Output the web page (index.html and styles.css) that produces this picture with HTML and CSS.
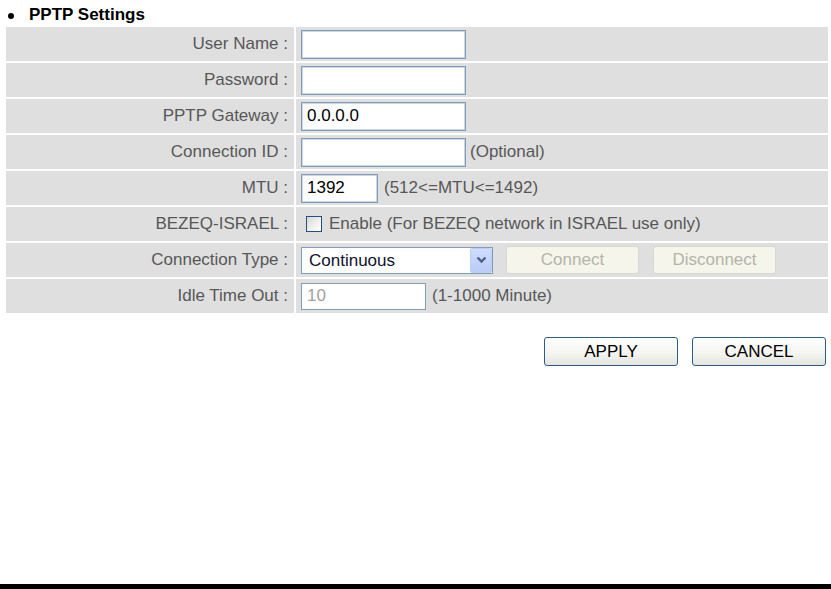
FILE: index.html
```html
<!doctype html>
<html lang="en">

<head>
  <meta charset="UTF-8">
  <meta name="viewport" content="width=device-width, initial-scale=1.0">
  <title>PPTP Settings</title>
  <link rel="stylesheet" href="styles.css">
</head>

<body>
  <div class="page">
    <h2 class="section-title"><span class="bullet"></span>PPTP Settings</h2>

    <table class="settings">
      <colgroup>
        <col class="label-col">
        <col>
      </colgroup>
      <tr>
        <td class="label">User Name :</td>
        <td class="value"><div class="controls"><input class="field field-wide" type="text"></div></td>
      </tr>
      <tr>
        <td class="label">Password :</td>
        <td class="value"><div class="controls"><input class="field field-wide" type="password"></div></td>
      </tr>
      <tr>
        <td class="label">PPTP Gateway :</td>
        <td class="value"><div class="controls"><input class="field field-wide" type="text" value="0.0.0.0"></div></td>
      </tr>
      <tr>
        <td class="label">Connection ID :</td>
        <td class="value">
          <div class="controls">
            <input class="field field-wide" type="text">
            <span class="hint hint-optional">(Optional)</span>
          </div>
        </td>
      </tr>
      <tr>
        <td class="label">MTU :</td>
        <td class="value">
          <div class="controls">
            <input class="field field-mtu" type="text" value="1392">
            <span class="hint">(512&lt;=MTU&lt;=1492)</span>
          </div>
        </td>
      </tr>
      <tr>
        <td class="label">BEZEQ-ISRAEL :</td>
        <td class="value">
          <div class="controls">
            <input class="check" type="checkbox">
            <span class="hint hint-check">Enable (For BEZEQ network in ISRAEL use only)</span>
          </div>
        </td>
      </tr>
      <tr>
        <td class="label">Connection Type :</td>
        <td class="value">
          <div class="controls">
            <span class="select-wrap">
              <select class="select">
                <option>Continuous</option>
                <option>Connect On Demand</option>
                <option>Manual</option>
              </select>
              <span class="select-arrow">
                <svg width="11" height="8" viewBox="0 0 11 8">
                  <path d="M1.5 1.5 L5.5 5.5 L9.5 1.5" fill="none" stroke="#4b5f87" stroke-width="2.4"/>
                </svg>
              </span>
            </span>
            <button class="btn-off btn-connect" disabled>Connect</button>
            <button class="btn-off btn-disconnect" disabled>Disconnect</button>
          </div>
        </td>
      </tr>
      <tr>
        <td class="label">Idle Time Out :</td>
        <td class="value">
          <div class="controls">
            <input class="field field-idle" type="text" value="10" disabled>
            <span class="hint">(1-1000 Minute)</span>
          </div>
        </td>
      </tr>
    </table>

    <div class="actions">
      <button class="btn">APPLY</button>
      <button class="btn">CANCEL</button>
    </div>

    <div class="bottom-bar"></div>
  </div>
</body>

</html>
```

FILE: styles.css
```css
body {
  margin: 0;
  background: #ffffff;
  font-family: "Liberation Sans", Arial, sans-serif;
}

.page {
  display: flex;
  flex-direction: column;
  height: 100vh;
}

.section-title {
  display: flex;
  align-items: center;
  margin: 0;
  padding-top: 5px;
  height: 20px;
  line-height: 20px;
  font-size: 17px;
  font-weight: bold;
  color: #000000;
}

.bullet {
  display: inline-block;
  width: 6px;
  height: 6px;
  margin: 1px 15px 0 8px;
  border-radius: 50%;
  background: #000000;
}

.settings {
  margin-left: 4px;
  width: 826px;
  border-spacing: 2px;
  table-layout: fixed;
}

.label-col {
  width: 288px;
}

.settings td {
  height: 34px;
  padding: 0;
  background: #dfdfdf;
  font-size: 17px;
  color: #575757;
}

.label {
  text-align: right;
  padding-right: 6px !important;
}

.value {
  padding-left: 5px !important;
  white-space: nowrap;
}

.controls {
  display: flex;
  align-items: center;
}

.field {
  box-sizing: border-box;
  height: 29px;
  margin: 0;
  padding: 0 5px;
  border: 1px solid #7f9db9;
  box-shadow: inset 0 0 0 1px #c9d6e4;
  background: #ffffff;
  font-family: "Liberation Sans", Arial, sans-serif;
  font-size: 17px;
  color: #000000;
  outline: none;
}

.field-wide {
  width: 165px;
}

.field-mtu {
  width: 77px;
}

.field-idle {
  width: 125px;
  height: 27px;
  color: #a0a0a0;
  box-shadow: none;
}

.hint {
  margin-left: 6px;
}

.hint-optional {
  margin-left: 4px;
}

.hint-check {
  margin-left: 7px;
}

.check {
  appearance: none;
  box-sizing: border-box;
  width: 16px;
  height: 16px;
  margin: 0 0 0 5px;
  border: 1px solid #1d5285;
  background: linear-gradient(135deg, #d8d8d2 0%, #f6f6f3 70%, #ffffff 100%);
}

.select-wrap {
  position: relative;
  display: block;
}

.select {
  appearance: none;
  box-sizing: border-box;
  display: block;
  width: 192px;
  height: 27px;
  margin: 0;
  padding: 0 26px 0 7px;
  border: 1px solid #7f9db9;
  border-radius: 0;
  background: #ffffff;
  font-family: "Liberation Sans", Arial, sans-serif;
  font-size: 17px;
  color: #101030;
  outline: none;
}

.select-arrow {
  position: absolute;
  top: 1px;
  right: 1px;
  bottom: 1px;
  width: 22px;
  display: flex;
  align-items: center;
  justify-content: center;
  box-sizing: border-box;
  border: 1px solid #bccdf2;
  border-radius: 2px;
  background: linear-gradient(#d0ddfc, #b9cbf7);
  pointer-events: none;
}

.btn-off {
  box-sizing: border-box;
  height: 28px;
  margin: 0 0 0 13px;
  padding: 0;
  border: 1px solid #d8d8cc;
  border-radius: 3px;
  background: #f5f5eb;
  font-family: "Liberation Sans", Arial, sans-serif;
  font-size: 17px;
  color: #b4b4a8;
}

.btn-connect {
  width: 133px;
}

.btn-disconnect {
  width: 123px;
  margin-left: 14px;
}

.actions {
  display: flex;
  justify-content: flex-end;
  gap: 14px;
  margin-top: 22px;
  padding-right: 5px;
}

.btn {
  box-sizing: border-box;
  width: 134px;
  height: 29px;
  padding: 0;
  border: 1px solid #2c5b8c;
  border-radius: 3px;
  background: linear-gradient(#ffffff, #f3f3ef 60%, #e4e4de);
  font-family: "Liberation Sans", Arial, sans-serif;
  font-size: 17px;
  color: #000000;
}

.bottom-bar {
  margin-top: auto;
  height: 5px;
  background: #000000;
}
```
